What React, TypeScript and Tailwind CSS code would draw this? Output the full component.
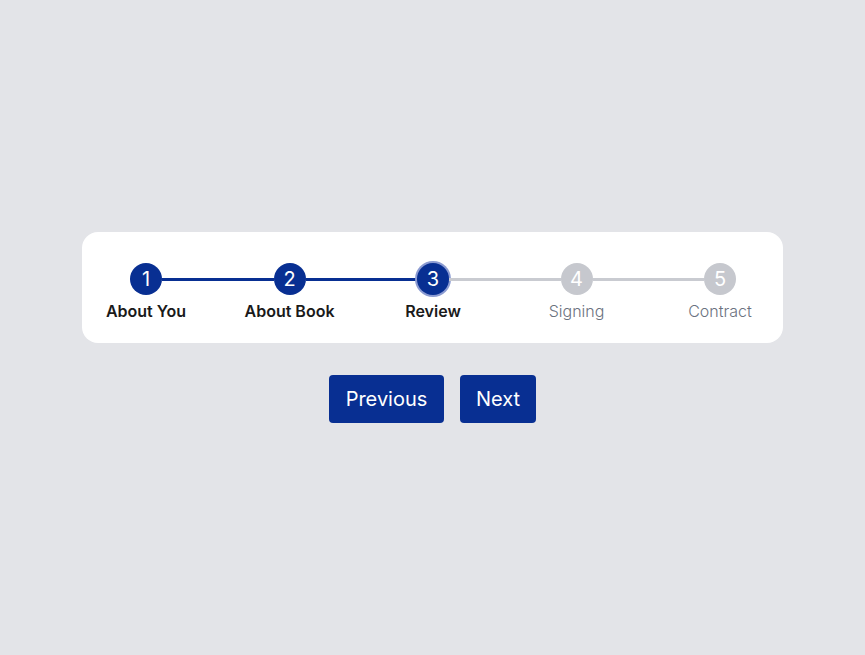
import React from 'react';

const steps = [
  { n: 1, label: 'About You' },
  { n: 2, label: 'About Book' },
  { n: 3, label: 'Review' },
  { n: 4, label: 'Signing' },
  { n: 5, label: 'Contract' },
];

const current = 3;

function Step({ n, label }: { n: number; label: string }) {
  const done = n <= current;
  return (
    <div className="flex w-8 flex-col items-center">
      <div
        className={`flex h-8 w-8 items-center justify-center rounded-full text-[20px] leading-none text-white ${
          done ? 'bg-[#082f92]' : 'bg-[#c6c8ce]'
        } ${n === current ? 'ring-2 ring-[#8b9bd2]' : ''}`}
      >
        {n}
      </div>
      <span
        className={`mt-[6px] whitespace-nowrap text-[16px] leading-5 ${
          done ? 'font-semibold text-[#1a1a1a]' : 'font-light text-[#6b7280]'
        }`}
      >
        {label}
      </span>
    </div>
  );
}

export default function App() {
  return (
    <div
      className="flex min-h-screen flex-col items-center justify-center bg-[#e3e4e8]"
      style={{ fontFamily: 'Inter, "Noto Sans", sans-serif' }}
    >
      <div className="w-[701px] rounded-2xl bg-white pl-[48px] pr-[47px] pt-[31px] pb-[22px]">
        <div className="flex items-start">
          {steps.map((s, i) => (
            <React.Fragment key={s.n}>
              {i > 0 && (
                <div
                  className={`mt-[14.5px] h-[3px] flex-1 ${
                    s.n <= current ? 'bg-[#082f92]' : 'bg-[#c9cbd1]'
                  }`}
                />
              )}
              <Step n={s.n} label={s.label} />
            </React.Fragment>
          ))}
        </div>
      </div>

      <div className="mt-8 flex gap-4">
        <button className="h-12 w-[115px] rounded bg-[#082f92] text-[20px] font-normal text-white">
          Previous
        </button>
        <button className="h-12 w-[76px] rounded bg-[#082f92] text-[20px] font-normal text-white">
          Next
        </button>
      </div>
    </div>
  );
}
